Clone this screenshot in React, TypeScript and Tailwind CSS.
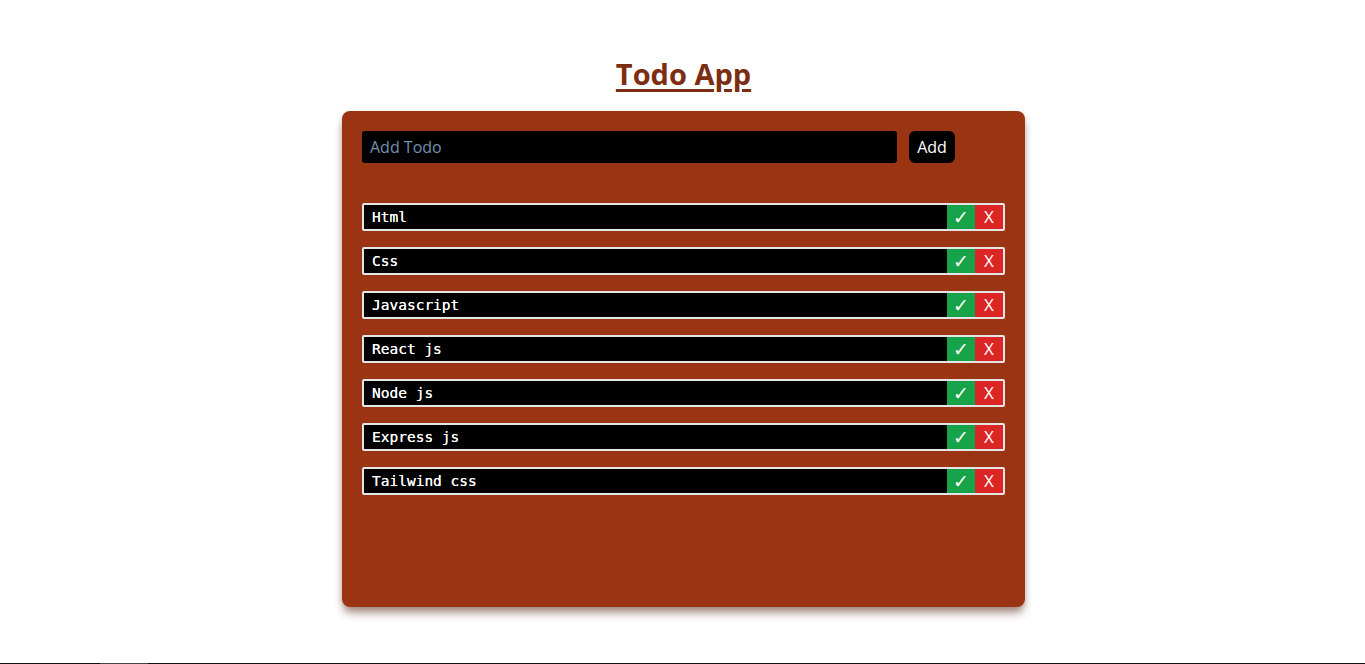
import React from "react";

const todos = ["Html", "Css", "Javascript", "React js", "Node js", "Express js", "Tailwind css"];

export default function App() {
  return (
    <div className="flex h-[664px] flex-col bg-white" style={{ fontFamily: "'Open Sans', 'Noto Sans', sans-serif" }}>
      <div className="flex flex-1 flex-col items-center pl-[2px]">
        <h1 className="mt-[56px] text-[29px] font-bold leading-[36px] text-[#7c2d12] underline decoration-[3px] underline-offset-[4px]">
          Todo App
        </h1>
        <div className="mt-[19px] h-[496px] w-[683px] rounded-lg bg-[#9a3412] p-5 shadow-[0_8px_10px_-2px_rgba(80,30,10,0.45),0_2px_6px_rgba(80,30,10,0.2)]">
          <div className="flex gap-3">
            <input
              type="text"
              placeholder="Add Todo"
              className="h-8 w-[535px] rounded-[3px] bg-black px-2 text-[16px] text-white outline-none placeholder:text-[#7590b0]"
            />
            <button className="h-8 w-[46px] rounded-md bg-black text-[16px] text-white">Add</button>
          </div>
          <div className="mt-10 flex flex-col gap-4">
            {todos.map((t) => (
              <div key={t} className="flex h-7 items-stretch overflow-hidden rounded-[2px] border-2 border-[#e5e5e5] bg-black">
                <div
                  className="flex flex-1 items-center pl-2 pt-px text-[14.5px] text-white [text-shadow:0_0_0.6px_#fff]"
                  style={{ fontFamily: "'DejaVu Sans Mono', 'Liberation Mono', monospace" }}
                >
                  {t}
                </div>
                <button
                  className="flex w-7 items-center justify-center bg-[#16a34a] text-[19px] leading-none text-white"
                  style={{ fontFamily: "'DejaVu Sans', sans-serif" }}
                >
                  ✓
                </button>
                <button className="flex w-7 items-center justify-center bg-[#dc2626] pb-px text-[17px] leading-none text-white">X</button>
              </div>
            ))}
          </div>
        </div>
      </div>
      <div className="flex h-px bg-[#111]">
        <div className="ml-[100px] w-[48px] bg-[#444]" />
      </div>
    </div>
  );
}
